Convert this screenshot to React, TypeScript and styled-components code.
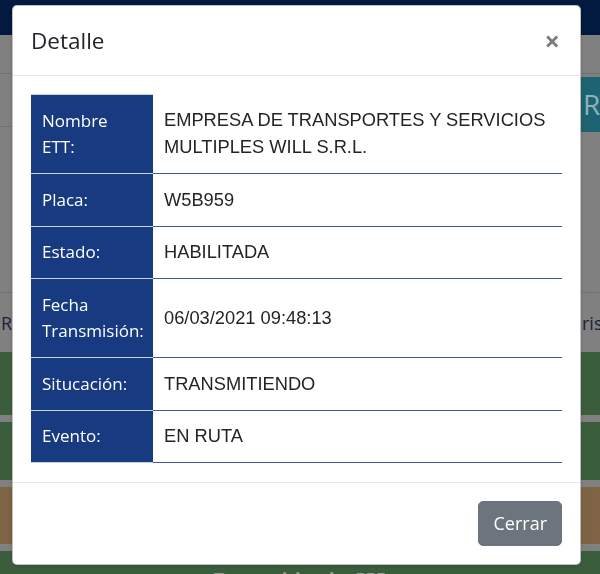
import React from "react";
import styled, { createGlobalStyle } from "styled-components";

const GlobalStyle = createGlobalStyle`
  html, body { margin: 0; padding: 0; }
  body { width: 600px; height: 574px; overflow: hidden; font-family: "Open Sans", "Noto Sans", sans-serif; }
  * { box-sizing: border-box; }
`;

const Page = styled.div`
  width: 600px;
  height: 574px;
  background: #808080;
  display: flex;
  flex-direction: column;
  overflow: hidden;
`;

const Nav = styled.div`
  height: 35px;
  flex: none;
  background: #021a40;
`;

const Band = styled.div<{ $h: number }>`
  height: ${(p) => p.$h}px;
  flex: none;
  border-bottom: 1px solid #707070;
`;

const ToolRow = styled.div`
  height: 60px;
  flex: none;
  display: flex;
  align-items: flex-start;
`;

const Filler = styled.div`
  flex: 1;
  height: 53px;
  border-bottom: 1px solid #707070;
`;

const TealButton = styled.div`
  width: 19px;
  height: 55px;
  margin-top: 3px;
  background: #1e6371;
  color: #8db2ba;
  font: 28px/55px "Open Sans", sans-serif;
  padding-left: 2px;
  overflow: hidden;
`;

const HeadRow = styled.div`
  height: 59px;
  flex: none;
  display: flex;
  justify-content: space-between;
  align-items: center;
  color: #1c2236;
  font: 18px "Open Sans", sans-serif;
  white-space: nowrap;
`;

const HeadCellL = styled.span`
  padding-left: 1px;
`;

const HeadCellR = styled.span`
  width: 18px;
  overflow: hidden;
`;

const DataRow = styled.div<{ $h?: number; $bg: string }>`
  ${(p) => (p.$h ? `height: ${p.$h}px; flex: none;` : "flex: 1;")}
  background: ${(p) => p.$bg};
  color: #9c9c9c;
  font: 700 18px/24px "Open Sans", sans-serif;
  text-align: center;
  padding-top: 16px;
  overflow: hidden;
`;

const Sep = styled.div`
  height: 7px;
  flex: none;
`;

const Modal = styled.div`
  position: fixed;
  left: 12px;
  top: 5px;
  width: 569px;
  background: #fff;
  border: 1px solid rgba(0, 0, 0, 0.25);
  border-radius: 5px;
  display: flex;
  flex-direction: column;
  box-shadow: 0 1px 4px rgba(0, 0, 0, 0.15);
`;

const Header = styled.div`
  display: flex;
  align-items: center;
  justify-content: space-between;
  padding: 18px 18px;
  border-bottom: 1px solid #e3e6ea;
`;

const Title = styled.h5`
  margin: 0;
  font: 500 22.5px/33px "Open Sans", sans-serif;
  color: #212529;
`;

const Close = styled.button`
  border: 0;
  background: none;
  padding: 0 2px 0 0;
  font: 700 27px/27px "Open Sans", sans-serif;
  color: #7c7c7c;
  cursor: pointer;
`;

const Body = styled.div`
  padding: 18px 18px 19px 18px;
`;

const Table = styled.table`
  width: 100%;
  border-collapse: collapse;
  table-layout: fixed;
`;

const Label = styled.th`
  width: 122px;
  background: #173a80;
  color: #fff;
  text-align: left;
  vertical-align: middle;
  font: 400 17px/26.5px "Open Sans", sans-serif;
  padding: 12.5px 11px;
  border-bottom: 1px solid #c9d1e2;
  border-top: 1px solid #c9d1e2;
`;

const Value = styled.td`
  color: #222428;
  font: 18.3px/26.5px "Liberation Sans", Arial, sans-serif;
  padding: 12.5px 11px;
  vertical-align: middle;
  border-bottom: 1px solid #3d5c9c;
`;

const Footer = styled.div`
  display: flex;
  justify-content: flex-end;
  padding: 18px 18px;
  border-top: 1px solid #e3e6ea;
`;

const Button = styled.button`
  background: #6c757d;
  color: #fff;
  border: 1px solid #6c757d;
  border-radius: 5px;
  padding: 8px 14px;
  font: 400 18px/27px "Open Sans", sans-serif;
  cursor: pointer;
`;

const rows: [string, string][] = [
  ["Nombre ETT:", "EMPRESA DE TRANSPORTES Y SERVICIOS MULTIPLES WILL S.R.L."],
  ["Placa:", "W5B959"],
  ["Estado:", "HABILITADA"],
  ["Fecha Transmisión:", "06/03/2021 09:48:13"],
  ["Situcación:", "TRANSMITIENDO"],
  ["Evento:", "EN RUTA"],
];

export default function App() {
  return (
    <>
      <GlobalStyle />
      <Page>
        <Nav />
        <Band $h={39} />
        <ToolRow>
          <Filler />
          <TealButton>R</TealButton>
        </ToolRow>
        <Band $h={159} />
        <HeadRow>
          <HeadCellL>R</HeadCellL>
          <HeadCellR>rista</HeadCellR>
        </HeadRow>
        <DataRow $h={63} $bg="#3a5e3b" />
        <Sep />
        <DataRow $h={58} $bg="#3a5e3b" />
        <Sep />
        <DataRow $h={57} $bg="#7e6445" />
        <Sep />
        <DataRow $bg="#3a5e3b">Transmitiendo: 555</DataRow>
      </Page>
      <Modal>
        <Header>
          <Title>Detalle</Title>
          <Close aria-label="Close">×</Close>
        </Header>
        <Body>
          <Table>
            <tbody>
              {rows.map(([k, v]) => (
                <tr key={k}>
                  <Label>{k}</Label>
                  <Value>{v}</Value>
                </tr>
              ))}
            </tbody>
          </Table>
        </Body>
        <Footer>
          <Button>Cerrar</Button>
        </Footer>
      </Modal>
    </>
  );
}
